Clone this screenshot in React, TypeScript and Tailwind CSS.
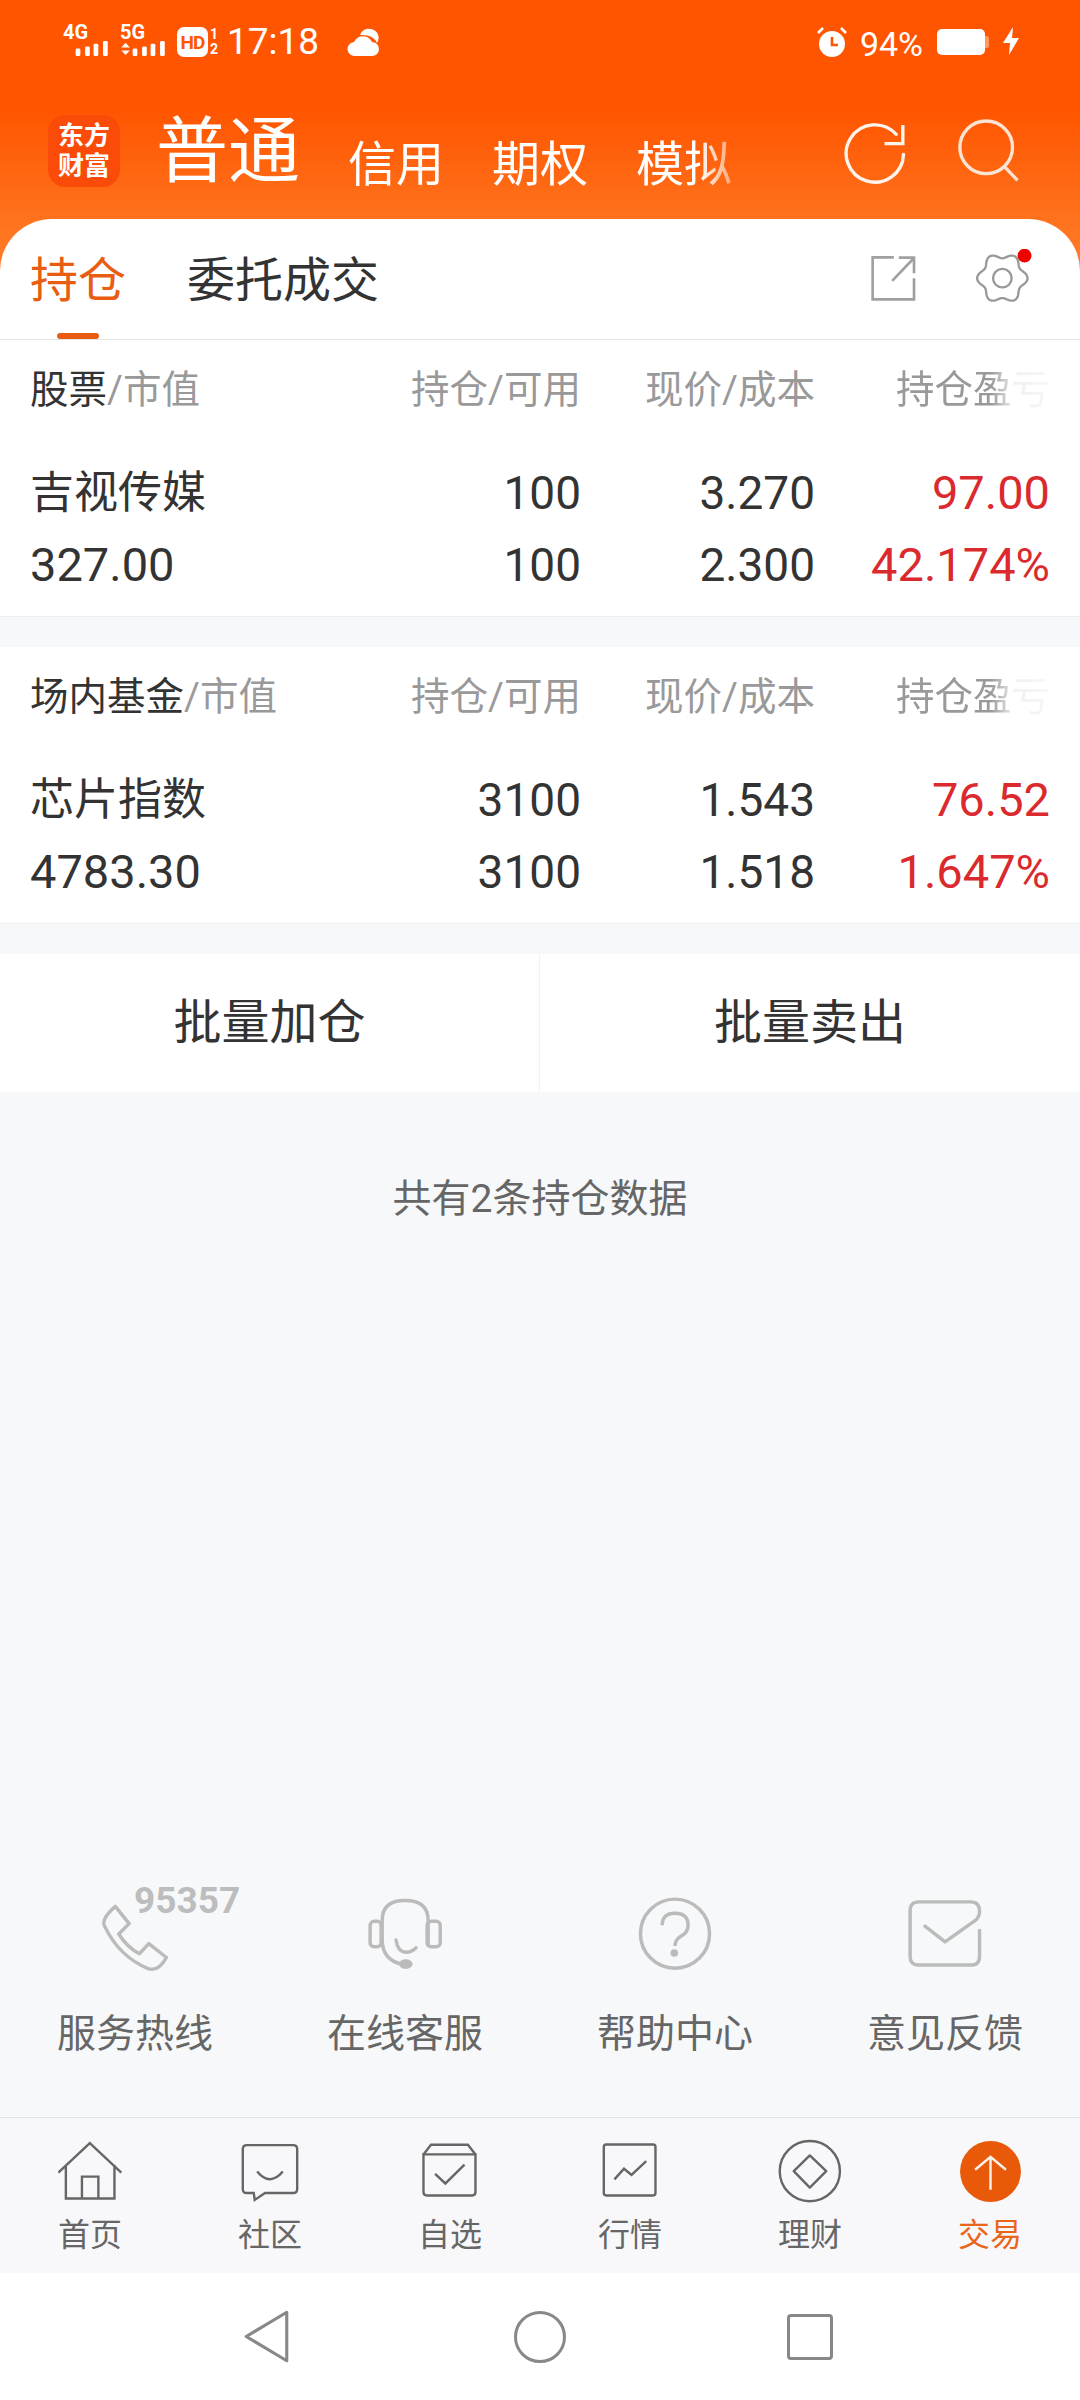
import React from 'react';

const gearPath = (() => {
  const pts: string[] = [];
  for (let i = 0; i < 120; i++) {
    const a = (i / 120) * Math.PI * 2;
    const r = 68 + 8 * Math.cos(6 * a);
    pts.push(`${(1340 + r * Math.cos(a)).toFixed(1)} ${(838 + r * Math.sin(a)).toFixed(1)}`);
  }
  return 'M' + pts.join('L') + 'Z';
})();

const Signal = ({ arrows }: { arrows?: boolean }) => (
  <svg viewBox="0 0 47 18" width={47} height={18} className="block">
    {arrows && (
      <g fill="#fff">
        <path d="M0 8 L4.5 3 L9 8Z" />
        <path d="M0 11 L9 11 L4.5 16Z" />
      </g>
    )}
    <rect x="12" y="9" width="5" height="8" rx="1.5" fill="#fff" />
    <rect x="22" y="7" width="5" height="10" rx="1.5" fill="#fff" />
    <rect x="31" y="4" width="5" height="13" rx="1.5" fill="#fff" />
    <rect x="41" y="1" width="5" height="16" rx="1.5" fill="#fff" />
  </svg>
);

const StatusBar = () => (
  <div className="h-[86px] flex justify-between items-start pt-[25px] pl-[63px] pr-[60px] text-white">
    <div className="flex items-start">
      <div className="w-[47px] h-[32px] flex flex-col">
        <span className="text-[20px] font-bold leading-[15px] h-[15px]">4G</span>
        <Signal />
      </div>
      <div className="w-[47px] h-[32px] flex flex-col ml-[10px]">
        <span className="text-[20px] font-bold leading-[15px] h-[15px]">5G</span>
        <Signal arrows />
      </div>
      <div className="ml-[10px] mt-[2px] w-[31px] h-[30px] bg-white rounded-[7px] flex items-center justify-center text-[#ff5500] text-[19px] font-bold leading-none tracking-[-1px]">
        HD
      </div>
      <div className="ml-[2px] mt-[2px] flex flex-col text-[14px] font-bold leading-[15px] w-[10px]">
        <span>1</span>
        <span>2</span>
      </div>
      <span className="ml-[7px] mt-[-3px] text-[37px] leading-[40px]">17:18</span>
      <svg viewBox="0 0 32 30" width={32} height={30} className="ml-[28px] mt-[3px]">
        <path d="M13 7 A9 9 0 0 1 24 1 A9 9 0 0 1 30 15 Q26 6 13 7Z" fill="#fff" />
        <path d="M8 28 A7 7 0 0 1 7 14 A10 10 0 0 1 25 14 A7 7 0 0 1 25 28Z" fill="#fff" />
      </svg>
    </div>
    <div className="flex items-start">
      <svg viewBox="0 0 30 30" width={30} height={30} className="mt-[2px]">
        <circle cx="15" cy="17" r="13" fill="#fff" />
        <path d="M15 10 V18 H21" fill="none" stroke="#ff5500" strokeWidth="2.6" />
        <path d="M1 6 L6 1 M29 6 L24 1" stroke="#fff" strokeWidth="2.6" />
      </svg>
      <span className="ml-[13px] mt-[1px] text-[34px] leading-[36px]">94%</span>
      <div className="ml-[14px] mt-[4px] w-[48px] h-[26px] bg-white rounded-[5px]" />
      <div className="mt-[11px] w-[4px] h-[12px] bg-[#ff9a5c] rounded-r-[2px]" />
      <svg viewBox="0 0 18 28" width={18} height={28} className="ml-[13px] mt-[2px]">
        <path d="M11 0 L1 16 H8 L7 28 L17 11 H10Z" fill="#fff" />
      </svg>
    </div>
  </div>
);

const HeaderRow = () => (
  <div className="h-[72px] mt-[29px] pl-[48px] flex items-end relative">
    <div className="w-[72px] h-[72px] rounded-[17px] bg-[#fa4c08] flex flex-col items-center justify-center text-white text-[26px] font-bold leading-[30px]">
      <span>东方</span>
      <span>财富</span>
    </div>
    <span className="ml-[36px] text-[72px] leading-[72px] text-white mb-[-1px]">普通</span>
    <div className="ml-[48px] w-[395px] flex gap-[48px] text-[48px] leading-[50px] text-white mb-[-3px] [mask-image:linear-gradient(to_right,black_350px,rgba(0,0,0,0.45)_382px,transparent_395px)]">
      <span className="shrink-0">信用</span>
      <span className="shrink-0">期权</span>
      <span className="shrink-0">模拟</span>
    </div>
    <svg viewBox="880 360 190 195" width={65} height={65} className="ml-[99px] mb-[1px]">
      <path d="M1062 460 A86 86 0 1 1 1040 400" fill="none" stroke="#fff4ec" strokeWidth="10" strokeLinecap="round" />
      <path d="M1060 372 V428 H1005" fill="none" stroke="#fff4ec" strokeWidth="10" />
    </svg>
    <svg viewBox="1210 355 190 195" width={65} height={65} className="ml-[49px] mb-[4px]">
      <circle cx="1298" cy="443" r="79" fill="none" stroke="#fde3d3" strokeWidth="10" />
      <path d="M1355 503 L1392 542" stroke="#fde3d3" strokeWidth="10" />
    </svg>
  </div>
);

const Tabs = () => (
  <div className="h-[121px] border-b border-[#e4e4e4] flex relative pl-[30px] pt-[34px]">
    <span className="text-[48px] leading-[56px] text-[#e85d10]">持仓</span>
    <span className="ml-[61px] text-[48px] leading-[56px] text-[#333]">委托成交</span>
    <div className="absolute left-[57px] bottom-0 w-[42px] h-[6px] rounded-[3px] bg-[#e85d10]" />
    <svg viewBox="955 762 148 148" width={51} height={49} className="ml-[489px] mt-[1px]">
      <path d="M1030 772 H966 V899 H1091 V835 M1025 843 L1088 777 M1045 773 H1091 V820" fill="none" stroke="#a0a0a0" strokeWidth="8" />
    </svg>
    <svg viewBox="1255 750 180 175" width={62} height={58} className="ml-[54px] mt-[-4px]">
      <path d={gearPath} fill="none" stroke="#999" strokeWidth="7" strokeLinejoin="round" />
      <circle cx="1340" cy="838" r="28" fill="none" stroke="#999" strokeWidth="7" />
      <circle cx="1407" cy="770" r="21" fill="#f10000" />
    </svg>
  </div>
);

const Section = ({ title, rows, extra }: { title: string; rows: string[][]; extra?: string }) => (
  <div className={`bg-white px-[30px] border-b border-[#eeeeee] ${extra ?? ''}`}>
    <div className="h-[100px] grid grid-cols-[1fr_250px_234px_235px] items-center text-[38.5px] text-[#999]">
      <span>
        <span className="text-[#333]">{title}</span>/市值
      </span>
      <span className="text-right">持仓/可用</span>
      <span className="text-right">现价/成本</span>
      <span className="text-right">
        <span className="inline-block [mask-image:linear-gradient(to_right,black_95px,rgba(0,0,0,0.15)_118px,rgba(0,0,0,0.08)_100%)]">持仓盈亏</span>
      </span>
    </div>
    <div className="pt-[17px] pb-[15px]">
      {rows.map((r) => (
        <div key={r[0]} className="h-[72px] grid grid-cols-[1fr_250px_234px_235px] items-center text-[#333]">
          <span className={/^\d/.test(r[0]) ? 'text-[47px]' : 'text-[44px]'}>{r[0]}</span>
          <span className="text-right text-[46px]">{r[1]}</span>
          <span className="text-right text-[46px]">{r[2]}</span>
          <span className="text-right text-[47px] text-[#da2a2e]">{r[3]}</span>
        </div>
      ))}
    </div>
  </div>
);

const HelpItem = ({ label, children }: { label: string; children: React.ReactNode }) => (
  <div className="flex flex-col items-center relative">
    {children}
    <span className="mt-[37px] text-[39px] leading-[50px] text-[#666]">{label}</span>
  </div>
);

const HelpRow = () => (
  <div className="mt-auto pb-[58px] grid grid-cols-4">
    <HelpItem label="服务热线">
      <svg viewBox="282 105 220 220" width={76} height={76}>
        <path d="M335 135 L375 185 L345 215 Q370 255 405 272 L432 243 L483 283 Q460 325 430 315 Q345 280 303 190 Q295 170 335 135Z" fill="none" stroke="#bbb" strokeWidth="10" strokeLinejoin="round" />
      </svg>
      <span className="absolute left-[134px] top-[-15px] text-[37px] leading-[40px] font-bold text-[#bdbdbd]">95357</span>
    </HelpItem>
    <HelpItem label="在线客服">
      <svg viewBox="1066 105 220 220" width={76} height={76} fill="none" stroke="#bbb" strokeWidth="10">
        <rect x="1075" y="178" width="32" height="74" rx="12" />
        <rect x="1240" y="178" width="38" height="74" rx="12" />
        <path d="M1110 235 V175 Q1110 118 1176 118 Q1243 118 1243 175 V252" />
        <path d="M1110 235 Q1112 290 1165 302" />
        <path d="M1150 232 Q1155 268 1180 268 Q1195 268 1208 255" strokeLinecap="round" />
        <ellipse cx="1178" cy="302" rx="20" ry="14" fill="#bbb" stroke="none" />
      </svg>
    </HelpItem>
    <HelpItem label="帮助中心">
      <svg viewBox="282 105 220 220" width={76} height={76} fill="none" stroke="#bbb" strokeWidth="10">
        <circle cx="392" cy="214" r="100" />
        <path d="M355 190 Q355 155 392 155 Q430 155 430 190 Q430 212 408 222 Q392 232 392 250" />
        <circle cx="390" cy="270" r="11" fill="#bbb" stroke="none" />
      </svg>
    </HelpItem>
    <HelpItem label="意见反馈">
      <svg viewBox="1066 105 220 220" width={76} height={76} fill="none" stroke="#bbb" strokeWidth="10" strokeLinecap="round" strokeLinejoin="round">
        <path d="M1276 205 V280 Q1276 305 1250 305 H1100 Q1075 305 1075 280 V148 Q1075 122 1100 122 H1250 Q1276 122 1276 150 Q1276 165 1265 175 L1176 238 L1118 192" />
      </svg>
    </HelpItem>
  </div>
);

const tabItems: { label: string; active?: boolean; box: string; icon: React.ReactNode }[] = [
  {
    label: '首页',
    box: '167 810 190 190',
    icon: <path d="M168 908 L260 822 L352 908 M190 885 V984 H332 V885 M237 984 V920 H285 V984" />,
  },
  {
    label: '社区',
    box: '689 810 190 190',
    icon: (
      <>
        <path d="M715 828 H850 Q862 828 862 840 V957 Q862 968 850 968 H768 L738 988 L735 968 H715 Q703 968 703 957 V840 Q703 828 715 828Z" />
        <path d="M745 905 Q782 950 820 905" />
      </>
    ),
  },
  {
    label: '自选',
    box: '1212 810 190 190',
    icon: (
      <>
        <path d="M1228 855 V965 Q1228 975 1238 975 H1370 Q1380 975 1380 965 V855Z" />
        <path d="M1228 855 L1250 827 H1358 L1380 855" />
        <path d="M1262 912 L1292 940 L1348 885" />
      </>
    ),
  },
  {
    label: '行情',
    box: '167 810 190 190',
    icon: (
      <>
        <rect x="184" y="826" width="151" height="149" rx="7" />
        <path d="M215 928 L243 897 L265 915 L308 875" />
      </>
    ),
  },
  {
    label: '理财',
    box: '689 810 190 190',
    icon: (
      <>
        <circle cx="782" cy="904" r="88" />
        <path d="M782 858 L830 904 L782 952 L735 904Z" strokeLinejoin="round" />
      </>
    ),
  },
  {
    label: '交易',
    active: true,
    box: '1212 810 190 190',
    icon: (
      <>
        <circle cx="1307" cy="905" r="89" fill="#e8590a" stroke="none" />
        <path d="M1307 862 V958 M1262 900 L1307 862 L1352 900" stroke="#fff3ea" />
      </>
    ),
  },
];

const TabBar = () => (
  <div className="h-[156px] bg-[#f8f8fa] border-t border-[#e3e4e8] grid grid-cols-6">
    {tabItems.map((t) => (
      <div key={t.label} className="flex flex-col items-center pt-[21px]">
        <svg viewBox={t.box} width={65} height={65} fill="none" stroke="#666" strokeWidth="7">
          {t.icon}
        </svg>
        <span className={`mt-[11px] text-[32px] leading-[40px] ${t.active ? 'text-[#e8651a]' : 'text-[#666]'}`}>{t.label}</span>
      </div>
    ))}
  </div>
);

const NavBar = () => (
  <div className="h-[127px] bg-white grid grid-cols-3 px-[135px] items-center justify-items-center">
    <svg viewBox="700 1300 150 170" width={52} height={59} fill="none" stroke="#888" strokeWidth="9" strokeLinejoin="round" className="ml-[-6px]">
      <path d="M832 1315 L715 1385 L832 1455Z" />
    </svg>
    <div className="w-[52px] h-[52px] rounded-full border-[3px] border-[#888]" />
    <div className="w-[46px] h-[46px] rounded-[4px] border-[3px] border-[#888]" />
  </div>
);

const App = () => {
  return (
    <div className="w-[1080px] h-[2400px] flex flex-col bg-[#f7f8fa] overflow-hidden font-['Roboto','Noto_Sans_CJK_SC',sans-serif]">
      <div className="h-[280px] shrink-0 bg-[linear-gradient(to_bottom,#ff5500_0px,#ff5500_110px,#ff7520_230px,#ff8030_280px)]">
        <StatusBar />
        <HeaderRow />
      </div>
      <div className="mt-[-61px] rounded-t-[52px] bg-white shrink-0">
        <Tabs />
      </div>
      <Section
        title="股票"
        rows={[
          ['吉视传媒', '100', '3.270', '97.00'],
          ['327.00', '100', '2.300', '42.174%'],
        ]}
      />
      <Section
        title="场内基金"
        extra="mt-[30px]"
        rows={[
          ['芯片指数', '3100', '1.543', '76.52'],
          ['4783.30', '3100', '1.518', '1.647%'],
        ]}
      />
      <div className="mt-[30px] h-[138px] shrink-0 bg-white grid grid-cols-2 text-[48px] text-[#333]">
        <div className="flex items-center justify-center border-r border-[#f2f2f2]">批量加仓</div>
        <div className="flex items-center justify-center">批量卖出</div>
      </div>
      <div className="pt-[82px] text-center text-[39px] leading-[50px] text-[#666]">共有2条持仓数据</div>
      <HelpRow />
      <TabBar />
      <NavBar />
    </div>
  );
};

export default App;
